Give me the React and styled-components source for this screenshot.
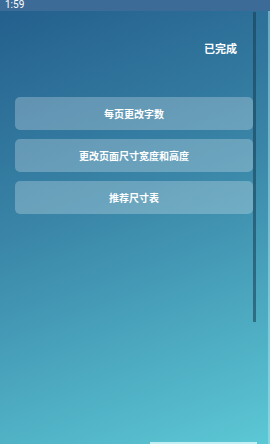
import React from "react";
import styled, { createGlobalStyle } from "styled-components";

const Global = createGlobalStyle`
  html, body {
    margin: 0;
    padding: 0;
  }
  body {
    font-family: "Noto Sans CJK SC", "Noto Sans", sans-serif;
  }
`;

const Screen = styled.div`
  position: relative;
  width: 270px;
  height: 444px;
  overflow: hidden;
  display: flex;
  flex-direction: column;
  background: linear-gradient(160deg, #235e8c 0%, #3a86a8 45%, #5cc8d5 100%);
`;

const StatusBar = styled.div`
  height: 11px;
  background: #3d6b97;
  color: #ffffff;
  font-family: "Roboto", "Liberation Sans", sans-serif;
  font-size: 10px;
  line-height: 9px;
  padding-left: 5px;
  overflow: hidden;
`;

const Header = styled.div`
  display: flex;
  justify-content: flex-end;
  padding: 30px 33px 0 0;
  height: 20px;
`;

const Done = styled.span`
  color: #ffffff;
  font-size: 11px;
  font-weight: 700;
  line-height: 14px;
`;

const List = styled.div`
  display: flex;
  flex-direction: column;
  gap: 9px;
  margin: 36px 17px 0 15px;
`;

const Option = styled.div`
  height: 33px;
  border-radius: 5px;
  background: rgba(255, 255, 255, 0.25);
  display: flex;
  align-items: center;
  justify-content: center;
  color: #ffffff;
  font-size: 10px;
  font-weight: 700;
`;

const ScrollLine = styled.div`
  position: absolute;
  left: 253px;
  top: 12px;
  width: 3px;
  height: 310px;
  background: rgba(20, 60, 80, 0.55);
`;

const Edge = styled.div`
  position: absolute;
  right: 0;
  top: 11px;
  width: 2px;
  bottom: 0;
  background: rgba(170, 230, 240, 0.5);
`;

const HomeBar = styled.div`
  position: absolute;
  left: 150px;
  width: 107px;
  bottom: 0;
  height: 2px;
  background: rgba(220, 250, 250, 0.8);
`;

const items = ["每页更改字数", "更改页面尺寸宽度和高度", "推荐尺寸表"];

export default function App() {
  return (
    <Screen>
      <Global />
      <StatusBar>1:59</StatusBar>
      <Header>
        <Done>已完成</Done>
      </Header>
      <List>
        {items.map((t) => (
          <Option key={t}>{t}</Option>
        ))}
      </List>
      <ScrollLine />
      <Edge />
      <HomeBar />
    </Screen>
  );
}
